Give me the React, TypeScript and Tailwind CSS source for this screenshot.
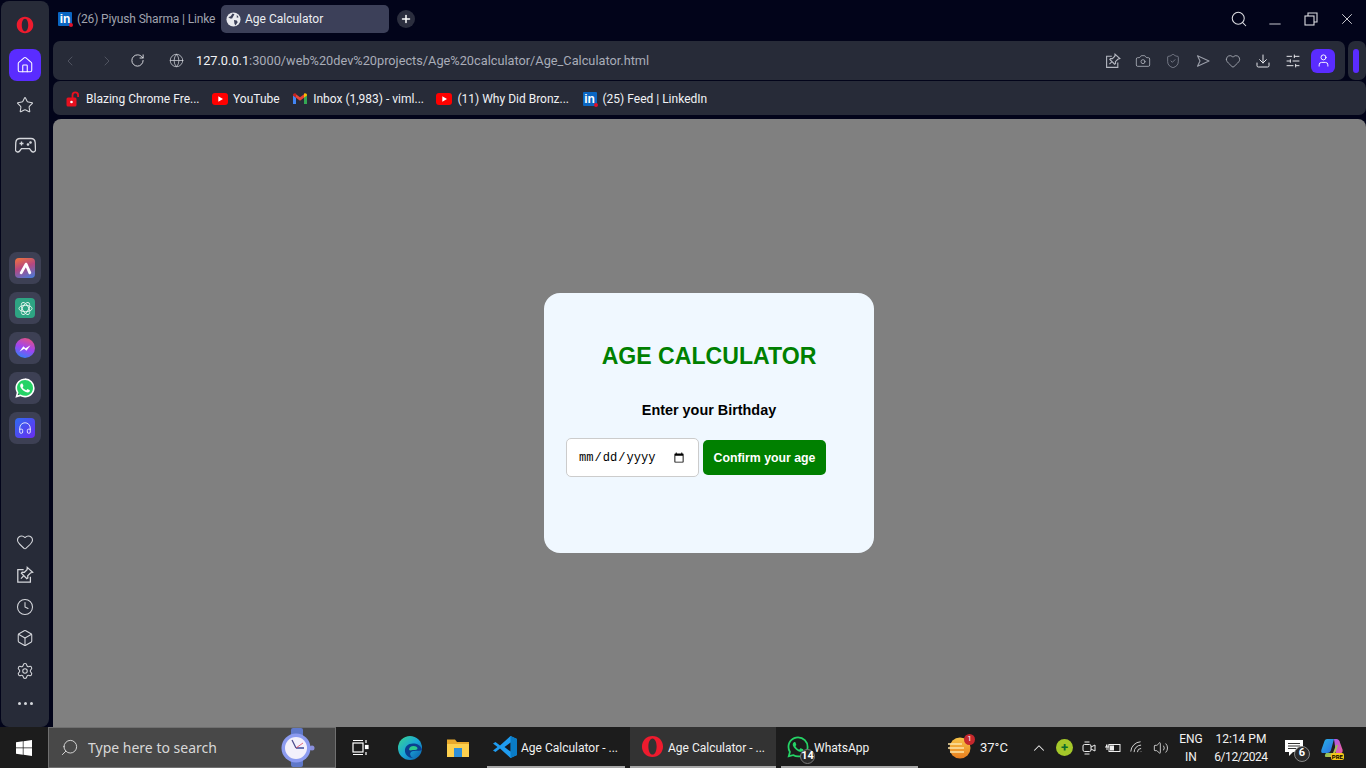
import {
  Box,
  Camera,
  ChevronLeft,
  ChevronRight,
  ChevronUp,
  Clock,
  Download,
  Globe,
  Headphones,
  Heart,
  Home,
  Minus,
  Plus,
  RotateCw,
  Search,
  Settings,
  ShieldCheck,
  SlidersHorizontal,
  Star,
  User,
  Volume2,
  Wifi,
  X,
} from 'lucide-react';
import { IoLogoWhatsapp } from 'react-icons/io5';

const ui = "font-['Roboto',sans-serif]";

const OperaLogo = ({ size = 18 }: { size?: number }) => (
  <svg width={size} height={size} viewBox="0 0 24 24">
    <path
      fillRule="evenodd"
      fill="#ee1b2e"
      d="M12 1C5.6 1 1 5.9 1 12s4.6 11 11 11 11-4.9 11-11S18.400 1 12 1zm0 2.600c2.600 0 4.300 3.900 4.300 8.400s-1.700 8.400-4.300 8.400-4.300-3.900-4.300-8.400S9.400 3.600 12 3.600z"
    />
  </svg>
);

const LinkedIn = () => (
  <span className="relative flex h-[14px] w-[14px] shrink-0 items-end justify-center rounded-[1px] bg-[#0a66c2] font-['Liberation_Sans',sans-serif] text-[12px] leading-[14px] font-bold text-white">
    in
    <span className="absolute right-[-1px] bottom-[-1px] h-[4px] w-[4px] rounded-full bg-[#e0102a]" />
  </span>
);

const YouTube = () => (
  <svg width="16" height="12" viewBox="0 0 16 12">
    <rect width="16" height="12" rx="3" fill="#f00" />
    <path d="M6.300 3.300v5.400L11 6z" fill="#fff" />
  </svg>
);

const Gmail = () => (
  <svg width="14" height="11" viewBox="0 0 14 11">
    <path d="M0 2v9h3V4.500z" fill="#4285f4" />
    <path d="M14 2v9h-3V4.500z" fill="#34a853" />
    <path d="M3 1.200 7 4.300l4-3.100v3.500L7 7.700 3 4.700z" fill="#ea4335" />
    <path d="M0 2c0-1.500 1.800-2.400 3-1.300v4L0 2.500z" fill="#c5221f" />
    <path d="M14 2c0-1.500-1.800-2.400-3-1.300v4l3-2.200z" fill="#fbbc04" />
  </svg>
);

const RedLock = () => (
  <svg width="14" height="16" viewBox="0 0 14 16">
    <rect x="0.500" y="6.500" width="10" height="9" rx="1.500" fill="#e8101f" />
    <path d="M6.500 7V4.200a2.800 2.800 0 0 1 5.600 0V6" fill="none" stroke="#e8101f" strokeWidth="1.800" />
    <circle cx="5.500" cy="11" r="1.300" fill="#fff" />
  </svg>
);

const TabGlobe = () => (
  <svg width="15" height="15" viewBox="0 0 16 16">
    <circle cx="8" cy="8" r="7.500" fill="#e8e9ee" />
    <path d="M2.500 5.500 5 4.500l2-3 2 1-1.500 2.500-1 2H4.500zM8.500 8.500l3 .5 1 2-2.500 3.500-1-2zM11.500 3l2 2.500-2 .5z" fill="#3c4059" />
  </svg>
);

const RestoreIcon = () => (
  <svg width="14" height="14" viewBox="0 0 14 14" fill="none" stroke="#dcdde2" strokeWidth="1.100">
    <rect x="1" y="4" width="9" height="9" />
    <path d="M4 4V1h9v9h-3" />
  </svg>
);

const PinIcon = ({ size = 16 }: { size?: number }) => (
  <svg width={size} height={size} viewBox="0 0 20 20" fill="none" stroke="currentColor" strokeWidth="1.400">
    <path d="M8.500 4H2v14h14v-6" />
    <path d="M12.500 1.500 18.500 7l-2.500.8-3 3 .2 2.400-1.200.8-6-6 .9-1.100 2.400.1 3-3z" />
    <path d="m8.500 11-3 3" />
  </svg>
);

const SendIcon = () => (
  <svg width="14" height="14" viewBox="0 0 14 14" fill="none" stroke="#9a9ea9" strokeWidth="1.100">
    <path d="M1.500 1.800 13 7 1.500 12.200 4 7z" strokeLinejoin="round" />
  </svg>
);

const GamepadIcon = () => (
  <svg width="21" height="17" viewBox="0 0 21 17" fill="none" stroke="currentColor" strokeWidth="1.300">
    <path d="M5 1.500h11c2.500 0 4 1.700 4.200 4l.3 7c.1 2.500-2.800 3.300-4.200 1.500l-1.800-2.300H6.500L4.700 14C3.300 15.800.4 15 .5 12.500l.3-7C1 3.200 2.500 1.500 5 1.500z" />
    <path d="M6.500 4.500v4M4.500 6.500h4" />
    <circle cx="13" cy="7.500" r="0.700" fill="currentColor" />
    <circle cx="15.500" cy="5.500" r="0.700" fill="currentColor" />
  </svg>
);

const AppTile = ({ children }: { children: React.ReactNode }) => (
  <div className="flex h-8 w-8 items-center justify-center rounded-[8px] bg-[#3d4054]">{children}</div>
);

const SideBar = () => (
  <aside className="ml-px mt-px flex h-[726px] w-12 shrink-0 flex-col items-center rounded-[8px] bg-[#272b38] text-[#d5d7dc]">
    <div className="mt-[15px]">
      <OperaLogo />
    </div>
    <div className="mt-[15px] flex h-8 w-8 items-center justify-center rounded-[8px] bg-[#5a2cff] text-white">
      <Home size={18} strokeWidth={1.4} />
    </div>
    <Star size={18} strokeWidth={1.4} className="mt-[15px]" />
    <div className="mt-[23px]">
      <GamepadIcon />
    </div>
    <div className="mt-[98px] flex flex-col gap-2">
      <AppTile>
        <div className="flex h-5 w-5 items-center justify-center rounded-[4px] bg-[linear-gradient(160deg,#f2763a,#b6477f_45%,#3f7fe0)]">
          <svg width="13" height="13" viewBox="0 0 12 12" fill="none" stroke="#fff" strokeWidth="2.600" strokeLinecap="round">
            <path d="M6.500 2 2 10M6.500 2 10 10" />
          </svg>
        </div>
      </AppTile>
      <AppTile>
        <div className="flex h-5 w-5 items-center justify-center rounded-[4px] bg-[#2ea483]">
          <svg width="15" height="15" viewBox="0 0 16 16" fill="none" stroke="#e5f5ef" strokeWidth="1">
            <ellipse cx="8" cy="8" rx="7" ry="3.400" />
            <ellipse cx="8" cy="8" rx="7" ry="3.400" transform="rotate(60 8 8)" />
            <ellipse cx="8" cy="8" rx="7" ry="3.400" transform="rotate(120 8 8)" />
          </svg>
        </div>
      </AppTile>
      <AppTile>
        <div className="flex h-5 w-5 items-center justify-center rounded-full bg-[linear-gradient(200deg,#f0556e,#a044f0_50%,#1e8cf8)]">
          <svg width="14" height="11" viewBox="0 0 12 10">
            <path d="M1 8 4.500 3l2 1.800L11 2 7.300 7 5.200 5.200z" fill="#fff" />
          </svg>
        </div>
      </AppTile>
      <AppTile>
        <div className="relative flex h-[22px] w-[22px] items-center justify-center">
          <span className="absolute h-[18px] w-[18px] rounded-full bg-[#25d366]" />
          <IoLogoWhatsapp size={22} className="relative text-white" />
        </div>
      </AppTile>
      <AppTile>
        <div className="flex h-5 w-5 items-center justify-center rounded-[4px] bg-[linear-gradient(135deg,#2f6cf0,#6a2cf0)] text-white">
          <Headphones size={14} strokeWidth={1.4} />
        </div>
      </AppTile>
    </div>
    <div className="mt-auto flex flex-col items-center">
      <Heart size={18} strokeWidth={1.4} />
      <div className="mt-[15px] h-[18px]">
        <PinIcon size={18} />
      </div>
      <Clock size={18} strokeWidth={1.4} className="mt-[14px]" />
      <Box size={18} strokeWidth={1.4} className="mt-[13px]" />
      <Settings size={18} strokeWidth={1.4} className="mt-[15px]" />
      <div className="mt-[22px] mb-[22px] flex gap-[3px]">
        <span className="h-[3px] w-[3px] rounded-full bg-[#d5d7dc]" />
        <span className="h-[3px] w-[3px] rounded-full bg-[#d5d7dc]" />
        <span className="h-[3px] w-[3px] rounded-full bg-[#d5d7dc]" />
      </div>
    </div>
  </aside>
);

const TabRow = () => (
  <div className={`flex h-[41px] items-start pt-[5px] text-[12px] ${ui}`}>
    <div className="ml-[5px] flex h-7 w-[158px] items-center gap-[5px] whitespace-nowrap text-[#a0a3ae]">
      <LinkedIn />
      <span className="tracking-[-0.14px]">(26) Piyush Sharma | Linke</span>
    </div>
    <div className="ml-[5px] flex h-7 w-[168px] items-center gap-[4px] rounded-[5px] bg-[#3c4059] pl-[5px] text-[#eceef2]">
      <TabGlobe />
      <span>Age Calculator</span>
    </div>
    <div className="ml-2 mt-[5px] flex h-[18px] w-[18px] items-center justify-center rounded-full bg-[#2b2e3e] text-white">
      <Plus size={12} strokeWidth={3} />
    </div>
    <div className="ml-auto flex h-7 items-center gap-[18px] pr-[10px] text-[#dcdde2]">
      <Search size={18} strokeWidth={1.4} />
      <Minus size={18} strokeWidth={1.2} className="translate-y-[5px]" />
      <span className="flex w-[18px] justify-center">
        <RestoreIcon />
      </span>
      <X size={18} strokeWidth={1.2} />
    </div>
  </div>
);

const AddressBar = () => (
  <div className="flex h-[39px] items-stretch gap-[3px]">
    <div className={`flex w-[1292px] items-center rounded-[7px] bg-[#272b38] text-[12.75px] ${ui}`}>
      <ChevronLeft size={16} strokeWidth={1.2} className="ml-[9px] text-[#5a5e6b]" />
      <ChevronRight size={16} strokeWidth={1.2} className="ml-[21px] text-[#5a5e6b]" />
      <RotateCw size={15} strokeWidth={1.5} className="ml-[15px] text-[#dfe0e5]" />
      <Globe size={15} strokeWidth={1.2} className="ml-[24px] text-[#cfd1d8]" />
      <span className="ml-[12px] whitespace-nowrap text-[#a9adb8]">
        <span className="text-[#f1f2f5]">127.0.0.1</span>:3000/web%20dev%20projects/Age%20calculator/Age_Calculator.html
      </span>
      <div className="ml-auto flex items-center gap-[14px] pr-[10px] text-[#b4b7c0]">
        <PinIcon size={16} />
        <Camera size={16} strokeWidth={1.2} />
        <ShieldCheck size={16} strokeWidth={1.1} className="text-[#8f93a0]" />
        <span className="flex w-4 justify-center">
          <SendIcon />
        </span>
        <Heart size={16} strokeWidth={1.2} />
        <Download size={16} strokeWidth={1.5} className="text-[#e4e5e9]" />
        <SlidersHorizontal size={16} strokeWidth={1.5} className="text-[#e4e5e9]" />
        <div className="-ml-[4px] flex h-6 w-6 items-center justify-center rounded-[6px] bg-[#5a2cff] text-white">
          <User size={15} strokeWidth={1.5} />
        </div>
      </div>
    </div>
    <div className="flex w-[18px] items-center justify-center rounded-[7px] bg-[#272b38] pr-[2px]">
      <span className="h-6 w-[6px] rounded-[3px] bg-[#5a2cff]" />
    </div>
  </div>
);

const Bookmark = ({ icon, label }: { icon: React.ReactNode; label: string }) => (
  <div className="flex items-center gap-[5px] whitespace-nowrap">
    <span className="flex min-w-4 items-center justify-center">{icon}</span>
    <span>{label}</span>
  </div>
);

const BookmarkBar = () => (
  <div className={`mt-px flex h-[34px] items-center gap-[12.500px] rounded-[7px] bg-[#272b38] pl-[12px] pt-px text-[12px] text-[#f1f2f5] ${ui}`}>
    <Bookmark icon={<RedLock />} label="Blazing Chrome Fre..." />
    <Bookmark icon={<YouTube />} label="YouTube" />
    <Bookmark icon={<Gmail />} label="Inbox (1,983) - viml..." />
    <Bookmark icon={<YouTube />} label="(11) Why Did Bronz..." />
    <Bookmark icon={<LinkedIn />} label="(25) Feed | LinkedIn" />
  </div>
);

const AgeCard = () => (
  <div className="flex h-[260px] w-[330px] flex-col rounded-[16px] bg-[#f0f8ff] pt-[49px] font-['Liberation_Sans',sans-serif]">
    <h1 className="text-center text-[23.1px] leading-[28px] font-bold text-[#008000]">AGE CALCULATOR</h1>
    <p className="mt-[32px] text-center text-[14.4px] leading-[16px] font-bold text-black">Enter your Birthday</p>
    <div className="mt-[20px] flex items-center gap-[4px] pl-[22px]">
      <input
        type="date"
        className="h-[39px] w-[133px] rounded-[5px] border border-[#ccc] bg-white px-[11px] pt-[2px] font-['Liberation_Mono',monospace] text-[12.1px] text-black"
      />
      <button className="h-[35px] w-[123px] rounded-[5px] bg-[#008000] pt-px text-[12.3px] font-bold text-white">
        Confirm your age
      </button>
    </div>
  </div>
);

const WindowsLogo = () => (
  <svg width="16" height="16" viewBox="0 0 16 16" fill="#fff">
    <path d="M0 2.200 6.800 1.300v6.300H0zM7.500 1.200 16 0v7.600H7.500zM0 8.300h6.800v6.400L0 13.800zM7.500 8.300H16V16l-8.500-1.200z" />
  </svg>
);

const Watch = () => (
  <svg width="34" height="39" viewBox="0 0 34 39">
    <rect x="10" y="0" width="12" height="39" rx="2" fill="#5f78c9" />
    <circle cx="31" cy="20" r="2.500" fill="#8a8fdc" />
    <circle cx="15" cy="20" r="14.500" fill="#8c9bf0" />
    <circle cx="15" cy="20" r="11" fill="#f3f0fb" />
    <path d="M15 20 11 12" stroke="#4a4a8a" strokeWidth="1.300" />
    <path d="M15 20h8" stroke="#3b4a9a" strokeWidth="1.500" />
    <path d="M15 20 22 15" stroke="#e0445a" strokeWidth="0.800" />
  </svg>
);

const TaskView = () => (
  <svg width="17" height="17" viewBox="0 0 17 17" fill="none" stroke="#fff" strokeWidth="1.200">
    <rect x="1" y="4" width="10" height="9" />
    <path d="M1 1.500h10M1 15.500h10M14 1v3M14 13v3" />
    <rect x="13.500" y="6.500" width="2.500" height="3" fill="#fff" />
  </svg>
);

const Edge = () => (
  <svg width="24" height="24" viewBox="0 0 24 24">
    <defs>
      <linearGradient id="edge" x1="0" y1="0" x2="1" y2="1">
        <stop offset="0" stopColor="#39d68c" />
        <stop offset="0.5" stopColor="#1aa6d8" />
        <stop offset="1" stopColor="#0c59a8" />
      </linearGradient>
    </defs>
    <circle cx="12" cy="12" r="12" fill="url(#edge)" />
    <path d="M24 14c-1-5-5-6.500-9-6.500-5 0-8.500 3-8 8 .4 3.500 3.500 6.500 8 6.500-3-1.500-3.500-4.500-2-6 2-2 7-.5 11-2z" fill="#0b3f8f" />
    <path d="M11 14c0-2.500 2-4 4.500-4s4 1 4 2.500-2 1.500-4 1.500-2.500 1-4.500 0z" fill="#2bc98d" />
  </svg>
);

const Explorer = () => (
  <svg width="22" height="20" viewBox="0 0 22 20">
    <path d="M0 1.500h8l2 2.500h12v15H0z" fill="#e8a92c" />
    <rect y="6" width="22" height="13" fill="#fdd04e" />
    <rect x="7" y="10" width="8" height="9" fill="#2f8fd8" />
  </svg>
);

const VsCode = () => (
  <svg width="24" height="24" viewBox="0 0 24 24">
    <path d="M17.500 1 24 4v16l-6.500 3L7 13.500 2.500 17 0 15.500 4.500 12 0 8.500 2.500 7 7 10.500z" fill="#1f9cf0" />
    <path d="M17.500 1 24 4v16l-6.500 3z" fill="#0a7cc6" />
    <path d="M17.500 7.500v9L11.500 12z" fill="#14181f" />
  </svg>
);

const WeatherIcon = () => (
  <span className="relative">
    <svg width="24" height="22" viewBox="0 0 24 22">
      <defs>
        <linearGradient id="sun" x1="0" y1="0" x2="0" y2="1">
          <stop offset="0" stopColor="#f7c448" />
          <stop offset="1" stopColor="#e87d1e" />
        </linearGradient>
      </defs>
      <circle cx="12" cy="11" r="10.500" fill="url(#sun)" />
      <path d="M0 7h14M0 11h16M2 15h14" stroke="#fbe3a6" strokeWidth="1.400" />
    </svg>
    <span className="absolute right-[-3px] top-[-3px] flex h-[11px] w-[11px] items-center justify-center rounded-full bg-[#c6282d] text-[8px] text-white">
      1
    </span>
  </span>
);

const NotifyIcon = () => (
  <span className="relative">
    <svg width="20" height="20" viewBox="0 0 20 20">
      <path d="M1 2h18v12H9l-4 4v-4H1z" fill="#fff" />
      <path d="M4 5.500h12M4 8h12M4 10.500h8" stroke="#333" strokeWidth="1" />
    </svg>
    <span className="absolute right-[-6px] bottom-[-4px] flex h-[16px] w-[16px] items-center justify-center rounded-full border border-[#888] bg-[#2a2a2a] text-[11px] font-bold text-white">
      6
    </span>
  </span>
);

const CopilotIcon = () => (
  <span className="relative">
    <svg width="22" height="22" viewBox="0 0 22 22">
      <defs>
        <linearGradient id="copA" x1="0" y1="0" x2="1" y2="1">
          <stop offset="0" stopColor="#28b4e8" />
          <stop offset="1" stopColor="#2b6be0" />
        </linearGradient>
        <linearGradient id="copB" x1="0" y1="0" x2="1" y2="1">
          <stop offset="0" stopColor="#a85ae8" />
          <stop offset="1" stopColor="#f2609a" />
        </linearGradient>
        <linearGradient id="copC" x1="0" y1="0" x2="1" y2="1">
          <stop offset="0" stopColor="#40c070" />
          <stop offset="1" stopColor="#f0c040" />
        </linearGradient>
      </defs>
      <path d="M6 2h7l-3 11c-.5 2-2 3-4 3H1.500C0 16 0 14 .5 12.500L3.500 4C4 2.700 5 2 6 2z" fill="url(#copA)" />
      <path d="M13 2h2.500c1.500 0 2.500 1 3 2.300l3 8.200c.5 1.500 0 3.500-1.500 3.500h-5z" fill="url(#copB)" />
      <path d="M5 20c-1.500 0-1.500-2 0-4h7l3-8h2l-3 9c-.5 2-2 3-4 3z" fill="url(#copC)" />
    </svg>
    <span className="absolute right-[-1px] bottom-[-1px] rounded-[2px] bg-[#f5c518] px-px text-[6px] leading-[7px] font-bold text-black">
      PRE
    </span>
  </span>
);

const TaskItem = ({
  icon,
  label,
  className,
}: {
  icon: React.ReactNode;
  label: string;
  className: string;
}) => (
  <div
    className={`flex h-full items-center gap-[4px] border-b-[2px] border-[#a8a8a8] text-[12px] whitespace-nowrap text-[#f2f2f2] ${className}`}
  >
    <span className="flex w-6 justify-center">{icon}</span>
    <span className="pt-[2px]">{label}</span>
  </div>
);

const TaskBar = () => (
  <footer className={`flex h-[41px] items-stretch bg-[#1c1c1c] ${ui}`}>
    <div className="flex w-12 items-center justify-center">
      <WindowsLogo />
    </div>
    <div className="flex w-[288px] items-center border border-[#6f6f6f] bg-[#484848] pl-[11px] font-['Noto_Sans',sans-serif] text-[14px] text-[#d8d8d8]">
      <Search size={19} strokeWidth={1.2} className="-scale-x-100" />
      <span className="ml-[9px]">Type here to search</span>
      <span className="ml-auto mr-[20px]">
        <Watch />
      </span>
    </div>
    <div className="flex w-[49px] items-center justify-center">
      <TaskView />
    </div>
    <div className="flex w-[50px] items-center justify-center">
      <Edge />
    </div>
    <div className="flex w-[46px] items-center justify-center">
      <Explorer />
    </div>
    <div className="w-[6px]" />
    <TaskItem icon={<VsCode />} label="Age Calculator - ..." className="w-[138px] pl-[6px]" />
    <div className="w-[5px]" />
    <TaskItem icon={<OperaLogo size={23} />} label="Age Calculator - ..." className="w-[146px] bg-[#333333] pl-[10px]" />
    <div className="w-[5px]" />
    <TaskItem
      icon={
        <span className="relative">
          <IoLogoWhatsapp size={24} className="text-[#25d366]" />
          <span className="absolute right-[-5px] bottom-[-5px] flex h-[15px] w-[15px] items-center justify-center rounded-full border border-[#777] bg-[#2a2a2a] text-[11px] font-bold text-white">
            14
          </span>
        </span>
      }
      label="WhatsApp"
      className="w-[137px] pl-[5px]"
    />
    <div className="ml-[30px] flex items-center">
      <WeatherIcon />
      <span className="ml-[8px] text-[13px] text-[#f2f2f2]">37°C</span>
    </div>
    <div className="ml-[22px] flex items-center gap-[8px] text-[#eeeeee]">
      <ChevronUp size={18} strokeWidth={1.4} />
      <span className="flex h-[17px] w-[17px] items-center justify-center rounded-full bg-[#a5c82a] text-[13px] leading-none font-bold text-[#0c6a2c]">
        +
      </span>
      <svg width="16" height="16" viewBox="0 0 16 16" fill="none" stroke="#eee" strokeWidth="1">
        <rect x="2" y="4.500" width="8" height="7" rx="1.500" />
        <path d="m10 7 4-2v6l-4-2M3.500 2h5M3.500 14h5" />
      </svg>
      <svg width="16" height="16" viewBox="0 0 16 16" fill="none" stroke="#eee" strokeWidth="1">
        <rect x="4" y="4.500" width="11" height="7" />
        <rect x="5" y="5.500" width="4" height="5" fill="#eee" stroke="none" />
        <path d="M0 7h4M1.500 4.500V7M3 4.500V7M2 7v3" />
      </svg>
      <Wifi size={16} strokeWidth={1.2} className="-rotate-45" />
      <Volume2 size={16} strokeWidth={1.2} />
    </div>
    <div className="ml-[3px] flex w-[38px] flex-col items-center justify-center text-[12px] leading-[18px] text-[#f2f2f2]">
      <span>ENG</span>
      <span>IN</span>
    </div>
    <div className="flex w-[62px] flex-col items-center justify-center text-[12px] leading-[18px] text-[#f2f2f2]">
      <span>12:14 PM</span>
      <span className="tracking-[-0.4px]">6/12/2024</span>
    </div>
    <div className="ml-[12px] flex items-center">
      <NotifyIcon />
    </div>
    <div className="ml-[17px] flex items-center">
      <CopilotIcon />
    </div>
  </footer>
);

const App = () => {
  return (
    <div className="flex h-[768px] w-[1366px] flex-col overflow-hidden bg-[#02041a]">
      <div className="flex h-[727px]">
        <SideBar />
        <main className="ml-[4px] flex min-w-0 flex-1 flex-col">
          <TabRow />
          <AddressBar />
          <BookmarkBar />
          <div className="mt-[4px] flex flex-1 items-center justify-center rounded-t-[8px] bg-[#808080] pr-px">
            <AgeCard />
          </div>
        </main>
      </div>
      <TaskBar />
    </div>
  );
};

export default App;
